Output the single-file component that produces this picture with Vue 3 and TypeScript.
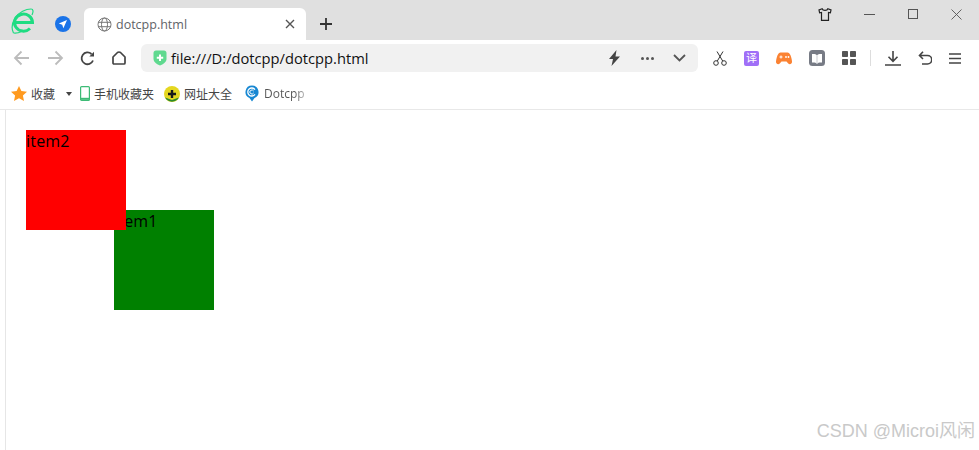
<script setup lang="ts">
const title = 'dotcpp.html'
</script>

<template>
  <div class="browser">
    <div class="tabbar">
      <svg class="logo" width="24" height="26" viewBox="0 0 24 26" fill="none" stroke="#1fdc82">
        <path d="M4.500 14.500H21.500A9 8.500 0 1 0 19 20.500" stroke-width="3"/>
        <path d="M2.500 25C.5 21 1 15 4 10 8 4 15 1 20 1c2.500 0 2.500 3 1 6" stroke-width="1.200"/>
        <path d="M2.500 25c3 .5 6-.5 8-1.500" stroke-width="1.200"/>
      </svg>
      <svg class="nav-tab" width="16" height="16" viewBox="0 0 16 16">
        <circle cx="8" cy="8" r="8" fill="#1a73e8"/>
        <path d="M12 4 3.800 7.600l3.400 1.200 1.200 3.400z" fill="#fff"/>
      </svg>
      <div class="tab">
        <svg width="15" height="15" viewBox="0 0 15 15" fill="none" stroke="#777" stroke-width="1">
          <circle cx="7.500" cy="7.500" r="6.500"/>
          <ellipse cx="7.500" cy="7.500" rx="3" ry="6.500"/>
          <path d="M1 5.300h13M1 9.700h13"/>
        </svg>
        <span class="tab-title">{{ title }}</span>
        <svg class="tab-close" width="10" height="10" viewBox="0 0 10 10" stroke="#555" stroke-width="1.400">
          <path d="m1 1 8 8M9 1 1 9"/>
        </svg>
      </div>
      <svg class="plus" width="12" height="12" viewBox="0 0 12 12" stroke="#333" stroke-width="1.800">
        <path d="M6 0v12M0 6h12"/>
      </svg>
      <div class="window-controls">
        <svg width="14" height="13" viewBox="0 0 14 13" fill="none" stroke="#222" stroke-width="1.200">
          <path d="M4.200.8 1 2l.6 2.800 1.900-.4V12.400h7V4.400l1.900.4L13 2 9.800.8C9.300 2.800 4.700 2.800 4.200.8z"/>
        </svg>
        <svg class="min" width="11" height="1" viewBox="0 0 11 1"><path d="M0 .5h11" stroke="#555"/></svg>
        <svg class="max" width="10" height="10" viewBox="0 0 10 10" fill="none" stroke="#555"><rect x=".5" y=".5" width="9" height="9"/></svg>
        <svg class="cls" width="11" height="11" viewBox="0 0 11 11" stroke="#555" stroke-width=".9"><path d="m.5.500 10 10M10.500.500l-10 10"/></svg>
      </div>
    </div>

    <div class="toolbar">
      <svg width="18" height="16" viewBox="0 0 18 16" fill="none" stroke="#bcbcbc" stroke-width="1.800">
        <path d="M16 8H2M8.500 1.500 2 8l6.500 6.500"/>
      </svg>
      <svg class="fwd" width="18" height="16" viewBox="0 0 18 16" fill="none" stroke="#bcbcbc" stroke-width="1.800">
        <path d="M2 8h14M9.500 1.500 16 8l-6.500 6.500"/>
      </svg>
      <svg class="reload" width="15" height="15" viewBox="0 0 15 15" fill="none" stroke="#444" stroke-width="1.800">
        <path d="M13 9.500A5.900 5.900 0 1 1 11.500 3"/>
        <path d="M14 .800V5.500H9.300z" fill="#444" stroke="none"/>
      </svg>
      <svg class="home" width="14" height="14" viewBox="0 0 14 14" fill="none" stroke="#444" stroke-width="1.700">
        <path d="M1 6 5.500 1.500Q7 .5 8.500 1.500L13 6V12Q13 13 12 13H2Q1 13 1 12z" stroke-linejoin="round"/>
      </svg>
      <div class="address">
        <svg width="14" height="16" viewBox="0 0 14 16">
          <path d="M3 .5h8c1.500 0 2.500 1 2.500 2.500v6c0 3-3.500 5.500-6.500 6.500C4 14.500.5 12 .5 9V3C.5 1.500 1.500.5 3 .5z" fill="#5fd98f"/>
          <path d="M7 4.500v6.500M3.800 7.800h6.400" stroke="#fff" stroke-width="2"/>
        </svg>
        <span class="url">file:///D:/dotcpp/dotcpp.html</span>
        <svg class="bolt" width="13" height="16" viewBox="0 0 13 16"><path d="M8.500 0 1 9h4l-1.500 7L12 6.500H7.500z" fill="#444"/></svg>
        <span class="dots"><i></i><i></i><i></i></span>
        <svg class="chev" width="13" height="8" viewBox="0 0 13 8" fill="none" stroke="#555" stroke-width="1.800"><path d="m1 1 5.500 5.500L12 1"/></svg>
      </div>
      <div class="tools">
        <svg width="14" height="15" viewBox="0 0 14 15" fill="none" stroke="#333" stroke-width="1">
          <circle cx="3" cy="12" r="2.300"/><circle cx="11" cy="12" r="2.300"/>
          <path d="M4.300 10 10 .5M9.700 10 4 .5"/>
        </svg>
        <span class="translate">译</span>
        <svg width="16" height="13" viewBox="0 0 16 13">
          <path d="M4.500.5h7C14 .5 15.500 5 16 9.500c.2 2.700-2.500 3.700-4 1.700L10.500 9.500h-5L4 11.200c-1.500 2-4.200 1-4-1.700C.5 5 2 .5 4.500.5z" fill="#fb8232"/>
          <path d="M3.500 5h3M5 3.500v3" stroke="#fff"/><circle cx="10" cy="5" r=".9" fill="#fff"/><circle cx="12.500" cy="5" r=".9" fill="#fff"/>
        </svg>
        <svg width="16" height="16" viewBox="0 0 16 16">
          <rect width="16" height="16" rx="3.500" fill="#777b85"/>
          <path d="M3 4c2-.3 4 0 5 1.200C9 4 11 3.700 13 4v8.500c-2-.3-4 0-5 1.200-1-1.200-3-1.500-5-1.200z" fill="#fff"/>
          <path d="M8 5.200v8.500" stroke="#c9cbd0"/>
        </svg>
        <svg width="14" height="14" viewBox="0 0 14 14" fill="#555">
          <rect width="6" height="6" rx=".8"/><rect x="8" width="6" height="6" rx=".8"/><rect y="8" width="6" height="6" rx=".8"/><rect x="8" y="8" width="6" height="6" rx=".8"/>
        </svg>
        <span class="sep"></span>
        <svg width="16" height="15" viewBox="0 0 16 15" fill="none" stroke="#444" stroke-width="1.600">
          <path d="M8 0v10M3.500 5.800 8 10.300l4.500-4.500M0 14h16"/>
        </svg>
        <svg width="14" height="14" viewBox="0 0 14 14" fill="none" stroke="#444" stroke-width="1.600">
          <path d="M1.500 4.500h8a3.800 3.800 0 0 1 0 8.500H4M5 .8 1.500 4.500 5 8"/>
        </svg>
        <svg width="12" height="11" viewBox="0 0 12 11" stroke="#444" stroke-width="1.500"><path d="M0 1h12M0 5.500h12M0 10h12"/></svg>
      </div>
    </div>

    <div class="bookmarks">
      <svg width="16" height="15" viewBox="0 0 16 15"><path d="m8 0 2.400 5 5.600.7-4.100 3.800 1.100 5.500L8 12.300 3 15l1.100-5.500L0 5.700 5.600 5z" fill="#ff9a1f"/></svg>
      <span class="bm first">收藏</span>
      <span class="caret"></span>
      <svg class="phone" width="10" height="15" viewBox="0 0 10 15" fill="none"><rect x=".6" y=".6" width="8.800" height="13.800" rx="1" stroke="#3dbb76" stroke-width="1.200"/><path d="M1 12.800h8" stroke="#3dbb76" stroke-width="2"/></svg>
      <span class="bm">手机收藏夹</span>
      <svg class="site" width="16" height="16" viewBox="0 0 16 16">
        <circle cx="8" cy="8" r="8" fill="#e5d720"/><path d="M1 11.500a8 8 0 0 0 14 0L8 14z" fill="#2c8a2c"/>
        <path d="M8 4v8M4 8h8" stroke="#1a1a1a" stroke-width="2.400"/>
      </svg>
      <span class="bm">网址大全</span>
      <svg class="site2" width="14" height="17" viewBox="0 0 14 17" fill="none">
        <path d="M7 .5a6.500 6.500 0 0 1 2.500 12.500L7 16.500 4.500 13A6.500 6.500 0 0 1 7 .5z" fill="#1787d2"/>
        <path d="M10 4.600A4 4 0 1 0 10 9.400" stroke="#fff" stroke-width="1.300"/>
        <path d="M8.600 6A2 2 0 1 0 8.600 8" stroke="#fff"/>
      </svg>
      <span class="bm dotcpp">Dotcpp</span>
    </div>

    <div class="page">
      <div class="stage">
        <div class="item item1">item1</div>
        <div class="item item2">item2</div>
      </div>
      <span class="watermark">CSDN @Microi风闲</span>
    </div>
  </div>
</template>

<style>
html, body { margin: 0; background: #fff; overflow: hidden; }
</style>

<style scoped>
.browser {
  width: 979px;
  height: 450px;
  display: flex;
  flex-direction: column;
  font-family: "Liberation Sans", "Noto Sans CJK SC", sans-serif;
  overflow: hidden;
}
svg { flex: none; display: block; }
.tabbar {
  height: 40px;
  background: #e0e0e0;
  display: flex;
  align-items: center;
  padding-left: 11px;
  flex: none;
}
.logo { margin-top: 2px; }
.nav-tab { margin-left: 20px; margin-top: 8px; }
.tab {
  width: 222px;
  height: 32px;
  margin-left: 13px;
  margin-top: 8px;
  box-sizing: border-box;
  padding: 0 0 0 13px;
  background: #fff;
  border-radius: 6px 6px 0 0;
  display: flex;
  align-items: center;
}
.tab-title {
  margin-left: 4px;
  font: 12.500px "Open Sans", "Liberation Sans", sans-serif;
  color: #5f6368;
}
.tab-close { margin-left: auto; margin-right: 11px; }
.plus { margin-left: 14px; margin-top: 7px; }
.window-controls {
  margin-left: auto;
  align-self: flex-start;
  display: flex;
  align-items: center;
  height: 14px;
  margin-top: 7px;
  padding-right: 17px;
}
.min { margin-left: 32px; }
.max { margin-left: 33px; }
.cls { margin-left: 33px; }

.toolbar {
  height: 38px;
  box-sizing: border-box;
  padding: 0 0 2px 13px;
  background: #fff;
  display: flex;
  align-items: center;
  flex: none;
}
.fwd { margin-left: 15px; }
.reload { margin-left: 16px; }
.home { margin-left: 17px; }
.address {
  width: 557px;
  height: 28px;
  margin-left: 15px;
  box-sizing: border-box;
  padding: 0 12px;
  background: #f1f1f1;
  border-radius: 6px;
  display: flex;
  align-items: center;
}
.url {
  margin-left: 4px;
  font-family: "Open Sans", "Liberation Sans", sans-serif;
  font-size: 14.700px;
  color: #111;
}
.bolt { margin-left: auto; margin-right: 2px; }
.dots { display: flex; gap: 2px; margin-left: 18px; }
.dots i { width: 3px; height: 3px; border-radius: 50%; background: #555; }
.chev { margin-left: 19px; }
.tools {
  display: flex;
  align-items: center;
  margin-left: 15px;
  gap: 17px;
}
.translate {
  width: 15px;
  height: 15px;
  background: #a06ff7;
  color: #fff;
  font-size: 11px;
  line-height: 15px;
  text-align: center;
  border-radius: 2px;
}
.sep { width: 1px; height: 16px; background: #ddd; margin: 0 -3px 0 -3px; }

.bookmarks {
  height: 32px;
  box-sizing: border-box;
  border-bottom: 1px solid #e8e8e8;
  display: flex;
  align-items: center;
  padding-left: 11px;
  flex: none;
}
.bm { font-size: 12px; color: #444; margin-left: 4px; white-space: nowrap; }
.first { margin-left: 4px; }
.caret {
  width: 0;
  height: 0;
  margin-left: 11px;
  border-left: 3px solid transparent;
  border-right: 3px solid transparent;
  border-top: 4px solid #444;
}
.phone { margin-left: 8px; }
.site { margin-left: 10px; }
.site2 { margin-left: 13px; }
.dotcpp {
  margin-left: 5px;
  width: 43px;
  overflow: hidden;
  font-family: "Open Sans", "Liberation Sans", sans-serif;
  font-size: 12px;
  background: linear-gradient(90deg, #555 72%, #ccc);
  -webkit-background-clip: text;
  background-clip: text;
  color: transparent;
}

.page {
  flex: 1;
  position: relative;
  background: #fff;
  box-sizing: border-box;
  margin-left: 5px;
  border-left: 1px solid #e6e6e6;
  padding: 20px 0 0 20px;
}
.stage { position: relative; height: 180px; }
.item {
  position: absolute;
  width: 100px;
  height: 100px;
  font-family: "Open Sans", "Liberation Sans", sans-serif;
  font-size: 16px;
  line-height: 22px;
  letter-spacing: .2px;
  color: #000;
}
.item1 { left: 88px; top: 80px; background: #008000; }
.item2 { left: 0; top: 0; background: #f00; }
.watermark {
  position: absolute;
  right: 4px;
  bottom: 8px;
  font-size: 18px;
  color: #c9c9c9;
  white-space: nowrap;
}
</style>
